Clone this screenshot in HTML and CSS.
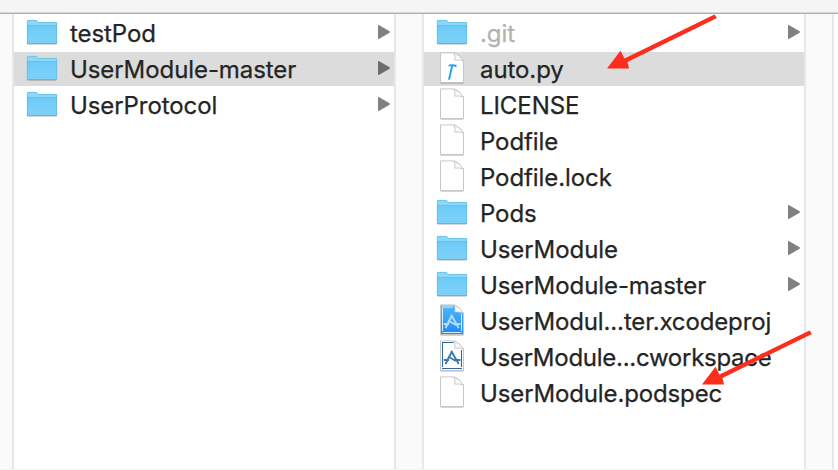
FILE: index.html
```
<!DOCTYPE html>
<html lang="en">
<head>
<meta charset="utf-8">
<title>Finder</title>
<link rel="stylesheet" href="styles.css">
</head>
<body>
<svg class="defs" aria-hidden="true">
  <defs>
    <linearGradient id="sky" x1="0" y1="0" x2="0" y2="1"><stop offset="0" stop-color="#6bcaf6"/><stop offset="1" stop-color="#7fd3fa"/></linearGradient>
    <linearGradient id="blue" x1="0" y1="0" x2="0" y2="1"><stop offset="0" stop-color="#53b9f5"/><stop offset="1" stop-color="#1f88f6"/></linearGradient>
    <symbol id="folder" viewBox="0 0 32 34">
      <path d="M1.500 28.500h29" stroke="#000" stroke-opacity=".16"/>
      <path d="M1 28V5.200Q1 4 2.200 4H9.500q1 0 1.700.8L12.500 6H29.800Q31 6 31 7.200V28Z" fill="#8bd7f8"/>
      <path d="M1 9.500H31V27.500H1Z" fill="url(#sky)"/>
      <path d="M1 9.500H31" stroke="#62bce4" stroke-width=".8"/>
      <path d="M1 27.500H31" stroke="#62b6dc"/>
      <path d="M1.500 25.500h29" stroke="#70c6ee" stroke-width=".6"/>
      <path d="M1.300 28V5.300Q1.300 4.300 2.300 4.300H9.500q1 0 1.700.8L12.500 6.400H29.700q1 0 1 1V28" fill="none" stroke="#59b5dd" stroke-width=".6"/>
    </symbol>
    <symbol id="file" viewBox="0 0 32 34">
      <path d="M4.500 31.200h23" stroke="#000" stroke-opacity=".18" stroke-width="1.500"/>
      <path d="M4.500.9H18Q23.500 2.500 27.500 9V30.500h-23Z" fill="#fff" stroke="#c1c1c1" stroke-width=".9"/>
      <path d="M18 .9Q19.500 4 18.800 8.200Q23.500 7.300 27.500 9Q24.500 3.500 18 .9Z" fill="#fafafa" stroke="#c4c4c4" stroke-width=".9"/>
    </symbol>
    <symbol id="script" viewBox="0 0 32 34">
      <use href="#file"/>
      <path d="M16.300 13 13 27.700" stroke="#20a5f3" stroke-width="1.900" fill="none"/>
      <path d="M12.200 13.700Q13.500 11.300 20.600 12.800L20.300 15.300 17.500 14.300 12.200 14.300Z" fill="#20a5f3"/>
    </symbol>
    <symbol id="tools" viewBox="0 0 32 34">
      <path d="M16.200 11 9.500 24M15.200 11 22.800 24M7.700 20H13M17.500 20H24.500M12 16.500l8 4.500" fill="none" stroke-width="1.900"/>
    </symbol>
    <symbol id="project" viewBox="0 0 32 34">
      <use href="#file"/>
      <path d="M5 1.500H18Q19.500 4 18.800 8.200Q23 7.300 27 9.500V30H5Z" fill="url(#blue)"/>
      <path d="M6.500 27V3H17M25.500 10V27M6.500 28.500h19" fill="none" stroke="#d5efff" stroke-width="1"/>
      <use href="#tools" stroke="#b5defb"/>
    </symbol>
    <symbol id="workspace" viewBox="0 0 32 34">
      <use href="#file"/>
      <path d="M17.500 2.500H6.500V27M25.500 10V27M6 28.500h20" fill="none" stroke="#2b6ba8" stroke-width="1.100"/>
      <use href="#tools" stroke="#3b78b0"/>
    </symbol>
    <symbol id="disclosure" viewBox="0 0 14 16">
      <path d="M2.300 1.200 12.600 7.300Q13.400 8 12.600 8.700L2.300 14.800Q1 15.200 1 14V2Q1 .8 2.300 1.200Z"/>
    </symbol>
  </defs>
</svg>
<div class="window">
  <header class="toolbar"></header>
  <main class="browser">
    <div class="gutter first"></div>
    <ul class="column">
      <li class="row"><svg class="icon"><use href="#folder"/></svg><span class="name">testPod</span><svg class="more"><use href="#disclosure"/></svg></li>
      <li class="row selected"><svg class="icon"><use href="#folder"/></svg><span class="name">UserModule-master</span><svg class="more"><use href="#disclosure"/></svg></li>
      <li class="row"><svg class="icon"><use href="#folder"/></svg><span class="name">UserProtocol</span><svg class="more"><use href="#disclosure"/></svg></li>
    </ul>
    <div class="gutter"></div>
    <ul class="column">
      <li class="row"><svg class="icon"><use href="#folder"/></svg><span class="name dim">.git</span><svg class="more"><use href="#disclosure"/></svg></li>
      <li class="row selected"><svg class="icon"><use href="#script"/></svg><span class="name">auto.py</span></li>
      <li class="row"><svg class="icon"><use href="#file"/></svg><span class="name">LICENSE</span></li>
      <li class="row"><svg class="icon"><use href="#file"/></svg><span class="name">Podfile</span></li>
      <li class="row"><svg class="icon"><use href="#file"/></svg><span class="name">Podfile.lock</span></li>
      <li class="row"><svg class="icon"><use href="#folder"/></svg><span class="name">Pods</span><svg class="more"><use href="#disclosure"/></svg></li>
      <li class="row"><svg class="icon"><use href="#folder"/></svg><span class="name">UserModule</span><svg class="more"><use href="#disclosure"/></svg></li>
      <li class="row"><svg class="icon"><use href="#folder"/></svg><span class="name">UserModule-master</span><svg class="more"><use href="#disclosure"/></svg></li>
      <li class="row"><svg class="icon"><use href="#project"/></svg><span class="name long">UserModul...ter.xcodeproj</span></li>
      <li class="row"><svg class="icon"><use href="#workspace"/></svg><span class="name longest">UserModule...cworkspace</span></li>
      <li class="row"><svg class="icon"><use href="#file"/></svg><span class="name long">UserModule.podspec</span></li>
    </ul>
    <div class="gutter"></div>
    <div class="column rest"></div>
  </main>
  <svg class="arrows" viewBox="0 0 838 470" fill="#fc2d1c">
    <path d="M714.500 14.500 717 18 627.500 62 629 68.500 607 68.500 620.500 50.800 624.500 58.500Z"/>
    <path d="M809.500 330.500 812 334 722.500 378 724 384.500 702 384.500 715.500 366.800 719.500 374.500Z"/>
  </svg>
</div>
</body>
</html>
```
FILE: styles.css
```
* { box-sizing: border-box; }
body { margin: 0; background: #fff; font-family: Inter, "Liberation Sans", sans-serif; }
.defs { position: absolute; width: 0; height: 0; }
.window { position: relative; width: 838px; height: 470px; overflow: hidden; display: flex; flex-direction: column; }
.toolbar { flex: none; height: 14px; background: #f5f5f5; border-bottom: 1px solid #adadad; box-shadow: inset 0 -1px #d9d9d9; }
.browser { flex: 1; display: flex; border-bottom: 1px solid #f3f3f3; }
.gutter { flex: none; width: 30px; background: #fafafa; border: solid #e7e7e7; border-width: 0 2px; }
.gutter.first { width: 14px; border-left: 0; }
.column { flex: none; width: 380px; margin: 0; padding: 2px 0 0; list-style: none; display: flex; flex-direction: column; gap: 2px; }
.column.rest { width: 4px; }
.row { height: 34px; display: flex; align-items: center; padding: 0 3px 0 12px; }
.selected { background: #dcdcdc; }
.icon { flex: none; width: 32px; height: 34px; }
.name { flex: 1; margin-left: 12px; padding-top: 2px; font-size: 24px; line-height: 34px; letter-spacing: -.08px; color: #242424; white-space: nowrap; -webkit-text-stroke: .25px; }
.long { letter-spacing: -.13px; }
.longest { letter-spacing: -.27px; }
.dim { color: #b2b2b2; }
.more { flex: none; width: 14px; height: 16px; margin-top: -2px; fill: #808080; }
.selected .more { fill: #6d6d6d; }
.arrows { position: absolute; inset: 0; width: 838px; height: 470px; }
```
